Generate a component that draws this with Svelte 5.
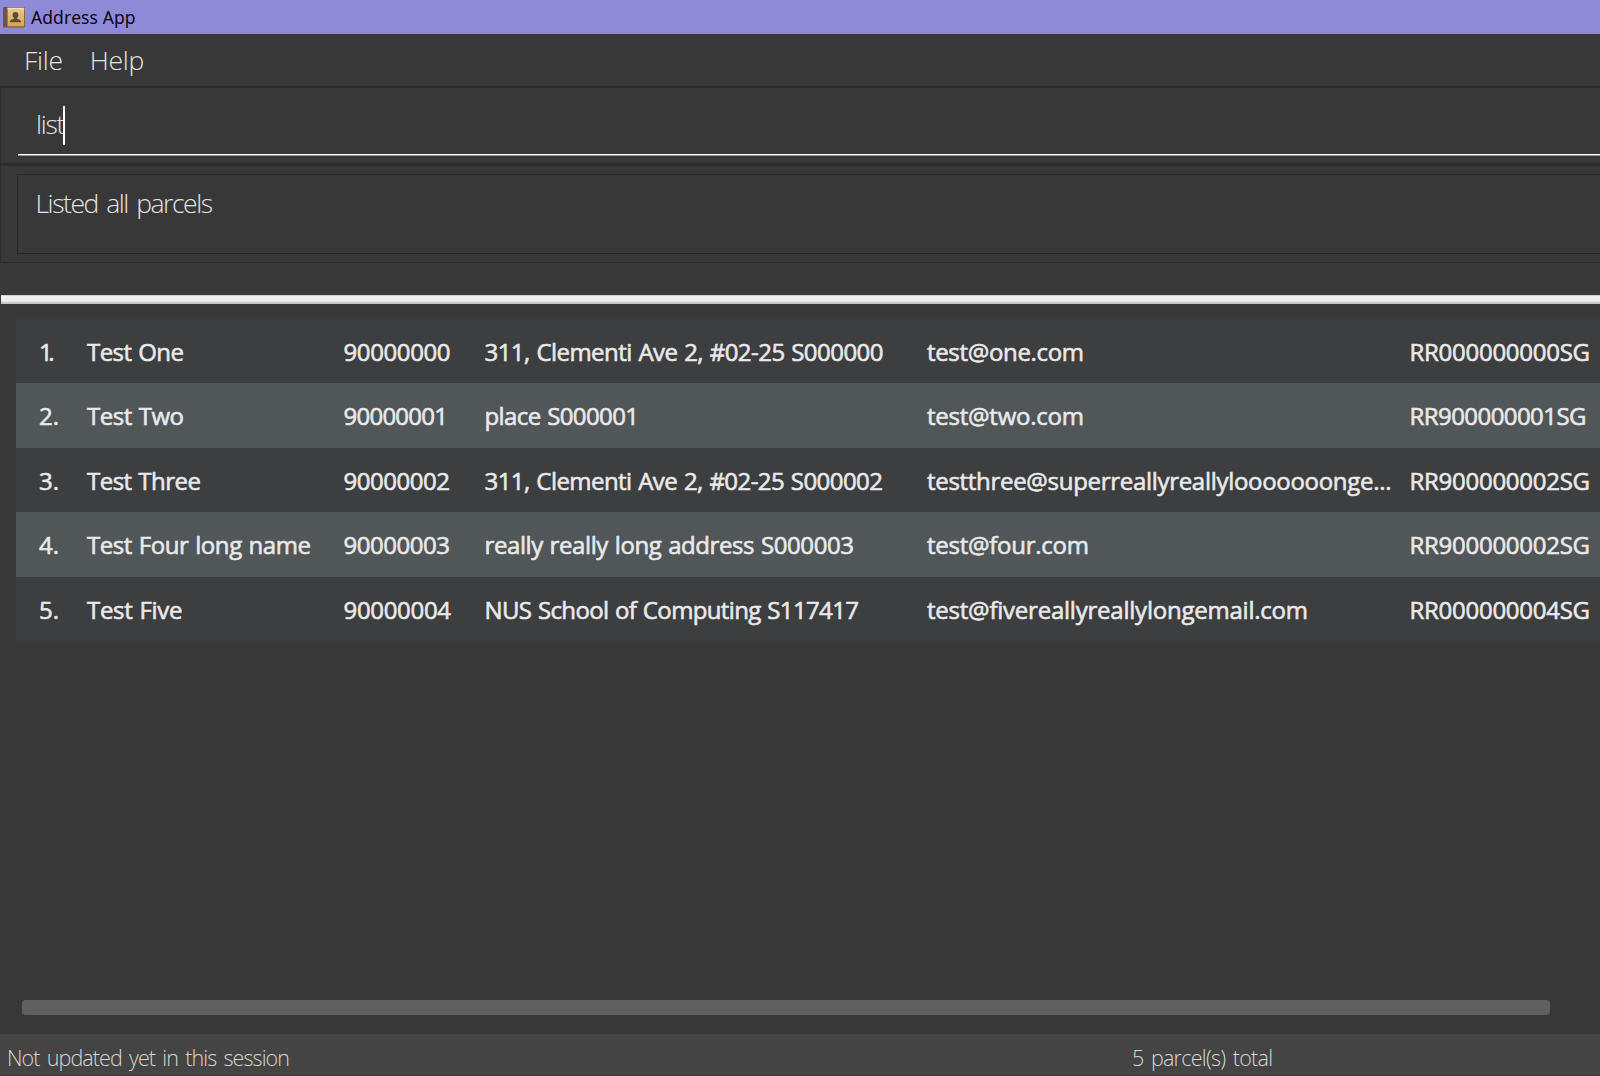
<script>
  const parcels = [
    { no: ['1.', 15.5], name: ['Test One', 97], phone: ['90000000', 107], address: ['311, Clementi Ave 2, #02-25 S000000', 399], email: ['test@one.com', 157], code: ['RR000000000SG', 180.5] },
    { no: ['2.', 20], name: ['Test Two', 97], phone: ['90000001', 104.5], address: ['place S000001', 154.5], email: ['test@two.com', 157], code: ['RR900000001SG', 177] },
    { no: ['3.', 20], name: ['Test Three', 114], phone: ['90000002', 106.5], address: ['311, Clementi Ave 2, #02-25 S000002', 398.5], email: ['testthree@superreallyreallylooooooonge...', 464.5], code: ['RR900000002SG', 180.5] },
    { no: ['4.', 20], name: ['Test Four long name', 224], phone: ['90000003', 106.5], address: ['really really long address S000003', 369.5], email: ['test@four.com', 162], code: ['RR900000002SG', 180.5] },
    { no: ['5.', 20], name: ['Test Five', 95.5], phone: ['90000004', 107.5], address: ['NUS School of Computing S117417', 374.5], email: ['test@fivereallyreallylongemail.com', 381], code: ['RR000000004SG', 180.5] }
  ];
  const columns = ['no', 'name', 'phone', 'address', 'email', 'code'];

  // Spreads the letters of a label so that it takes up the given width.
  function track(node, width) {
    const range = document.createRange();
    range.selectNodeContents(node);
    const natural = range.getBoundingClientRect().width;
    const gaps = node.textContent.length - 1;
    node.style.letterSpacing = `${(width - natural) / gaps}px`;
  }
</script>

<div class="window">
  <header class="titlebar">
    <svg class="app-icon" width="22" height="21" viewBox="0 0 22 21">
      <defs>
        <linearGradient id="cover" x1="0" y1="0" x2="0" y2="1">
          <stop offset="0" stop-color="#ecca92" />
          <stop offset="1" stop-color="#dba24b" />
        </linearGradient>
      </defs>
      <rect x="0" y="0" width="22" height="20.5" rx="1.2" fill="#77592f" />
      <rect x="0.6" y="0.8" width="3.6" height="18.8" fill="#63584b" />
      <rect x="4.6" y="0.8" width="16.6" height="18.6" fill="url(#cover)" />
      <path d="M4.6 1.3h16.6" stroke="#fae6c0" />
      <path d="M12.5 5c1.900 0 2.900 1.200 2.900 2.900 0 1.500-.6 2.400-1.400 3.100v.8c1.500.6 4 1 4 3.400H7c0-2.400 2.400-2.800 4-3.400V11c-.8-.7-1.400-1.600-1.400-3.100C9.600 6.200 10.600 5 12.500 5z" fill="#5f4a32" />
    </svg>
    <span class="title" use:track={104.5}>Address App</span>
  </header>

  <nav class="menubar">
    <span use:track={39}>File</span>
    <span use:track={54.5}>Help</span>
  </nav>

  <section class="command">
    <div class="field"><span use:track={29.5}>list</span><i class="caret"></i></div>
  </section>

  <section class="result">
    <div class="message"><span use:track={177.5}>Listed all parcels</span></div>
  </section>

  <div class="divider"></div>

  <main class="list">
    {#each parcels as parcel}
      <div class="row">
        {#each columns as column}
          <div class="cell"><span use:track={parcel[column][1]}>{parcel[column][0]}</span></div>
        {/each}
      </div>
    {/each}
  </main>

  <div class="scrollbar"><div class="thumb"></div></div>

  <footer class="statusbar">
    <span use:track={283}>Not updated yet in this session</span>
    <span use:track={141}>5 parcel(s) total</span>
  </footer>
</div>

<style>
  :global(body) {
    background: #383838;
    overflow: hidden;
  }
  .window {
    box-sizing: border-box;
    width: 1600px;
    height: 1076px;
    display: flex;
    flex-direction: column;
    overflow: hidden;
    background: #383838;
    font-family: 'Open Sans', 'Noto Sans', sans-serif;
    font-weight: 300;
    font-size: 26.5px;
    white-space: nowrap;
    color: #e4e4e4;
  }
  .titlebar {
    box-sizing: border-box;
    height: 34px;
    flex: none;
    display: flex;
    align-items: center;
    gap: 6px;
    padding-left: 3px;
    background: #8e8ad8;
    color: #000;
    font-size: 17.5px;
    font-weight: 400;
  }
  .app-icon {
    margin-top: 1px;
  }
  .menubar {
    height: 52px;
    flex: none;
    display: flex;
    gap: 27px;
    padding-left: 24px;
    line-height: 52px;
  }
  .command {
    box-sizing: border-box;
    height: 77px;
    flex: none;
    border: 2px solid #2c2c2c;
    border-width: 2px 0 0 1px;
    padding-left: 17px;
  }
  .field {
    box-sizing: border-box;
    height: 68px;
    display: flex;
    align-items: center;
    padding-left: 18px;
    border-bottom: 1px solid #8f9292;
    box-shadow: inset 0 -1px #fff;
  }
  .field span {
    padding-top: 5px;
  }
  .caret {
    width: 2px;
    height: 39px;
    margin: 7px 0 0 -1px;
    background: #fff;
  }
  .result {
    box-sizing: border-box;
    height: 100px;
    flex: none;
    border: 1px solid #2c2c2c;
    border-width: 3px 0 1px 1px;
    padding: 8px 0 0 16px;
  }
  .message {
    box-sizing: border-box;
    height: 80px;
    border: 1px solid #272727;
    border-width: 1px 0 1px 1px;
    padding-left: 17.5px;
    line-height: 56px;
    word-spacing: 3px;
  }
  .divider {
    height: 9px;
    flex: none;
    margin: 32px 0 15px 1px;
    background: linear-gradient(#cfcfcf 0 1px, #f1f1f1 1px, #ededed 6px, #c4c4c4 8px);
  }
  .list {
    flex: 1;
    padding-left: 16px;
    font-size: 24px;
    font-weight: 400;
    -webkit-text-stroke: 0.6px currentColor;
    color: #e9e9e9;
  }
  .row {
    display: grid;
    grid-template-columns: 48px 256.5px 141px 442.5px 482.5px 190px;
    padding-left: 23px;
    height: 64.4px;
    line-height: 66px;
    background: #3c3e3f;
    word-spacing: 1px;
  }
  .row:nth-child(even) {
    background: #515658;
  }
  .scrollbar {
    flex: none;
    height: 34px;
    padding-left: 22px;
  }
  .thumb {
    width: 1528px;
    height: 15px;
    border-radius: 4px;
    background: #606060;
  }
  .statusbar {
    box-sizing: border-box;
    height: 42px;
    flex: none;
    display: grid;
    grid-template-columns: 1125px 1fr;
    padding-left: 7px;
    border-bottom: 1px solid #40373b;
    background: #444;
    font-size: 21.5px;
    line-height: 47px;
    word-spacing: 2.5px;
    color: #d6d6d6;
  }
</style>
